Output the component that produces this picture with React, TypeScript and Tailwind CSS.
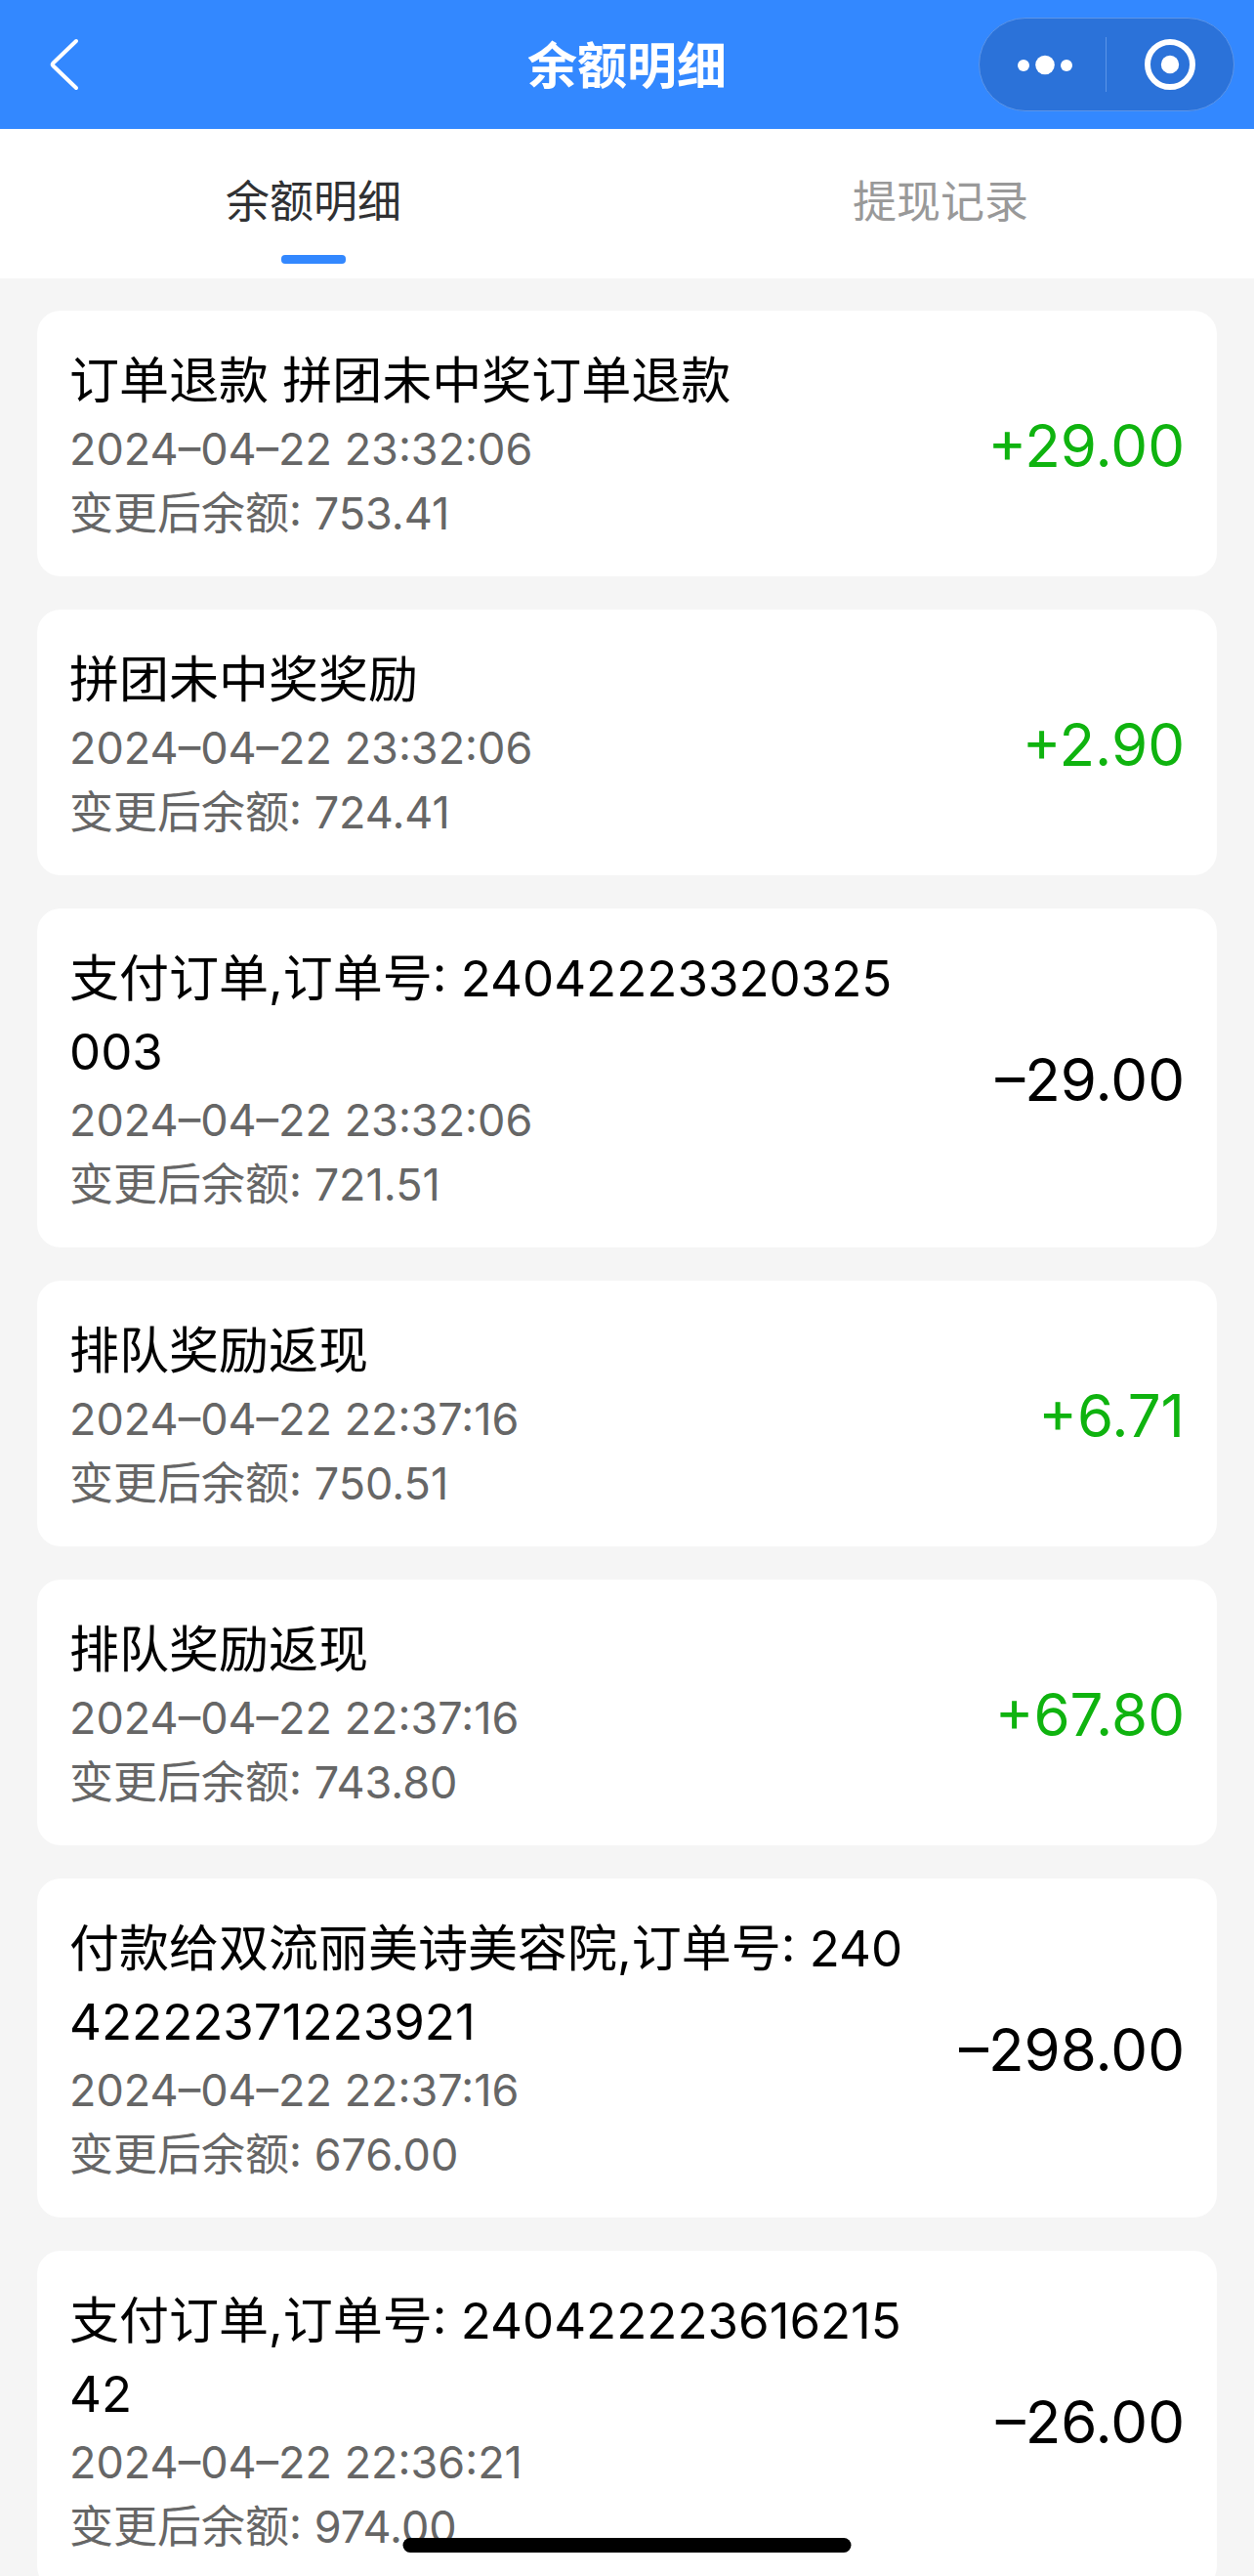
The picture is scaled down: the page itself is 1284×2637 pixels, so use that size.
type Entry = {
  title: string;
  time: string;
  balance: string;
  amount: string;
};

const entries: Entry[] = [
  { title: '订单退款 拼团未中奖订单退款', time: '2024–04–22 23:32:06', balance: '753.41', amount: '+29.00' },
  { title: '拼团未中奖奖励', time: '2024–04–22 23:32:06', balance: '724.41', amount: '+2.90' },
  { title: '支付订单,订单号: 24042223320325003', time: '2024–04–22 23:32:06', balance: '721.51', amount: '–29.00' },
  { title: '排队奖励返现', time: '2024–04–22 22:37:16', balance: '750.51', amount: '+6.71' },
  { title: '排队奖励返现', time: '2024–04–22 22:37:16', balance: '743.80', amount: '+67.80' },
  { title: '付款给双流丽美诗美容院,订单号: 24042222371223921', time: '2024–04–22 22:37:16', balance: '676.00', amount: '–298.00' },
  { title: '支付订单,订单号: 24042222361621542', time: '2024–04–22 22:36:21', balance: '974.00', amount: '–26.00' },
];

function Header() {
  return (
    <header className="grid grid-cols-3 items-center h-33 px-5 bg-[#3388ff] text-white">
      <button type="button" aria-label="返回" className="justify-self-start pl-6">
        <svg width="44" height="56" viewBox="0 0 44 56" fill="none" stroke="currentColor" strokeWidth="4" strokeLinecap="round" strokeLinejoin="round">
          <path d="M34 4 L10.5 26.5 Q9 28 10.5 29.5 L34 52" />
        </svg>
      </button>
      <h1 className="pt-0.5 text-center text-[51px] leading-[75px] font-bold">余额明细</h1>
      <div className="justify-self-end flex items-center w-[262px] h-24 rounded-full border border-[#5c95e8] bg-[#2b72d9]">
        <button type="button" aria-label="更多" className="flex-1 flex justify-center">
          <svg width="60" height="24" viewBox="0 0 60 24" fill="currentColor">
            <circle cx="10" cy="13" r="6" />
            <circle cx="32" cy="12.5" r="9.8" />
            <circle cx="54" cy="13" r="6" />
          </svg>
        </button>
        <span className="w-px h-14 bg-[#5c95e8]" />
        <button type="button" aria-label="关闭" className="flex-1 flex justify-center">
          <svg width="54" height="54" viewBox="0 0 54 54">
            <circle cx="27" cy="27" r="23" fill="none" stroke="currentColor" strokeWidth="6" />
            <circle cx="27" cy="27" r="9.2" fill="currentColor" />
          </svg>
        </button>
      </div>
    </header>
  );
}

function Tabs() {
  return (
    <nav className="grid grid-cols-2 h-[153px] bg-white text-[45px] leading-[66px]">
      <button type="button" className="flex flex-col items-center pt-[42px] text-[#303133]">
        余额明细
        <span className="mt-[21px] w-[66px] h-[9px] rounded-sm bg-[#3388ff]" />
      </button>
      <button type="button" className="flex flex-col items-center pt-[42px] text-[#999999]">
        提现记录
      </button>
    </nav>
  );
}

function EntryCard({ entry }: { entry: Entry }) {
  const income = entry.amount.startsWith('+');

  return (
    <li className="flex items-center justify-between px-[33px] pt-[34px] pb-[31px] rounded-3xl bg-white">
      <div className="w-3/4 text-[45px] leading-[66px] text-[#666666]">
        <h2 className="text-[51px] leading-[75px] text-black break-all">{entry.title}</h2>
        <p>{entry.time}</p>
        <p>变更后余额: {entry.balance}</p>
      </div>
      <span className={income ? 'text-[60px] text-[#0fb30f]' : 'text-[60px] text-black'}>
        {entry.amount}
      </span>
    </li>
  );
}

function App() {
  return (
    <div className="h-screen overflow-hidden bg-[#f5f5f5] font-[Inter,'Noto_Sans_CJK_SC',sans-serif]">
      <Header />
      <Tabs />
      <ul className="flex flex-col gap-[34px] px-[38px] pt-[33px]">
        {entries.map((entry, idx) => (
          <EntryCard key={idx} entry={entry} />
        ))}
      </ul>
      {/* home indicator */}
      <div className="fixed bottom-6 left-1/2 -translate-x-1/2 w-[459px] h-[15px] rounded-full bg-black" />
    </div>
  );
}

export default App;
